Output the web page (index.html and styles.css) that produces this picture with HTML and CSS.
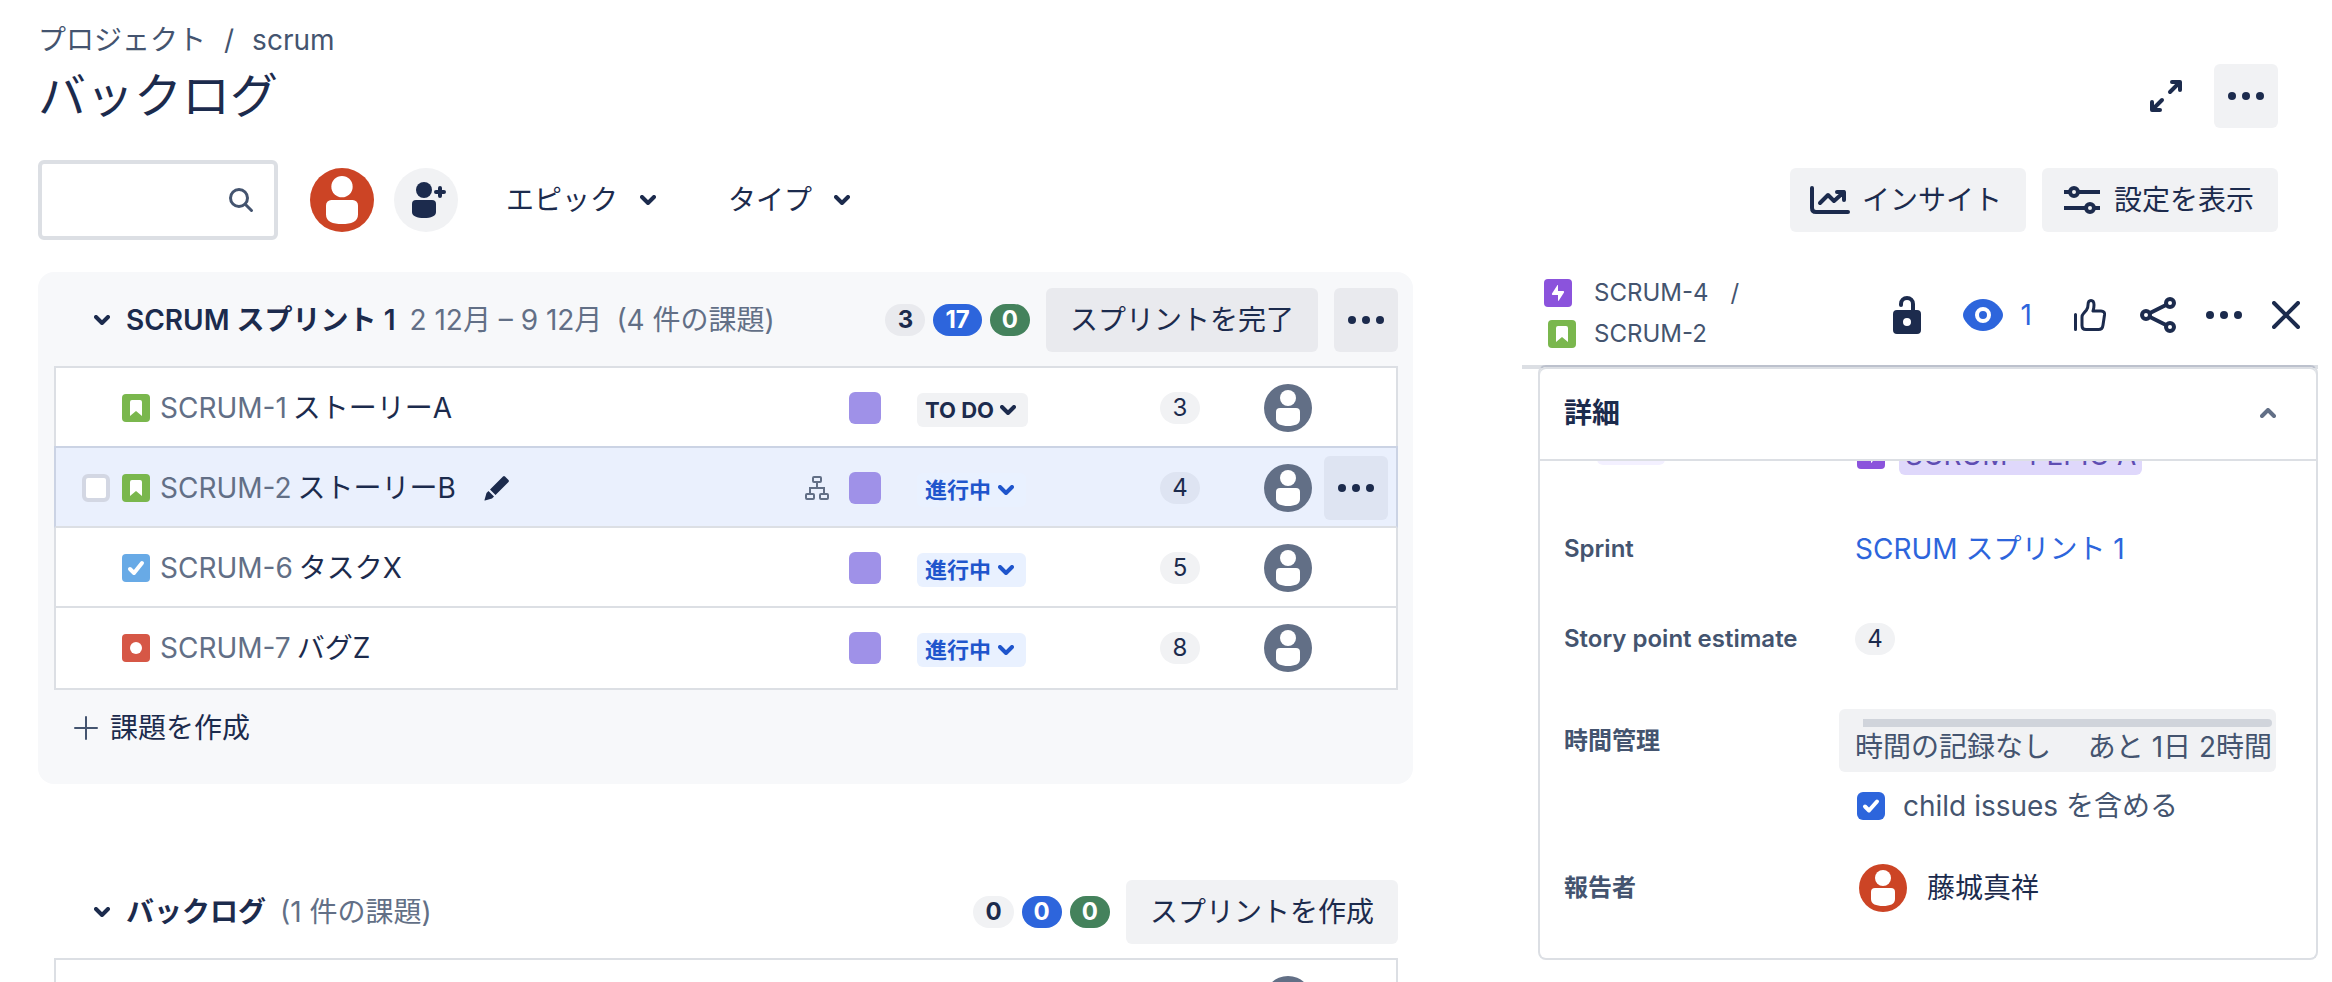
FILE: index.html
```html
<!DOCTYPE html>
<html lang="ja">
<head>
<meta charset="utf-8">
<title>バックログ - scrum</title>
<link rel="stylesheet" href="styles.css">
</head>
<body>
<svg class="sprite" aria-hidden="true">
  <symbol id="avatar" viewBox="0 0 48 48">
    <circle cx="24" cy="24" r="24" fill="currentColor"/>
    <circle cx="24" cy="14" r="8" fill="#fff"/>
    <path d="M16 24h16a4 4 0 0 1 4 4v7c0 5-5 7-12 7s-12-2-12-7v-7a4 4 0 0 1 4-4z" fill="#fff"/>
  </symbol>
  <symbol id="chevron" viewBox="0 0 16 10">
    <path d="M2 2l6 6 6-6" fill="none" stroke="currentColor" stroke-width="4" stroke-linecap="round" stroke-linejoin="round"/>
  </symbol>
  <symbol id="dots" viewBox="0 0 36 8">
    <circle cx="4" cy="4" r="4" fill="currentColor"/><circle cx="18" cy="4" r="4" fill="currentColor"/><circle cx="32" cy="4" r="4" fill="currentColor"/>
  </symbol>
  <symbol id="story" viewBox="0 0 28 28">
    <rect width="28" height="28" rx="4" fill="#7ab74d"/>
    <path d="M10 6h8a2 2 0 0 1 2 2v14l-6-5-6 5V8a2 2 0 0 1 2-2z" fill="#fff"/>
  </symbol>
  <symbol id="task" viewBox="0 0 28 28">
    <rect width="28" height="28" rx="4" fill="#68aae6"/>
    <path d="M8 15l4 4 8-10" fill="none" stroke="#fff" stroke-width="4" stroke-linecap="round" stroke-linejoin="round"/>
  </symbol>
  <symbol id="bug" viewBox="0 0 28 28">
    <rect width="28" height="28" rx="4" fill="#d65746"/>
    <circle cx="14" cy="14" r="6" fill="#fff"/>
  </symbol>
  <symbol id="epic" viewBox="0 0 28 28">
    <rect width="28" height="28" rx="4" fill="#8b53dc"/>
    <path d="M14 6v6h5.500q1 .5.500 1.500L14.500 22 14 21.500V16H8.500q-1-.5-.5-1.500L13.500 6z" fill="#fff"/>
  </symbol>
</svg>

<div class="page">
  <header class="page-head">
    <nav class="crumbs" aria-label="パンくず">
      <a href="#">プロジェクト</a><span>/</span><a href="#">scrum</a>
    </nav>
    <div class="title-row">
      <h1>バックログ</h1>
      <div class="title-actions">
        <button class="icon-button" aria-label="全画面">
          <svg width="32" height="32" viewBox="0 0 32 32" fill="none" stroke="currentColor" stroke-width="4" stroke-linecap="round" stroke-linejoin="round"><path d="M20 12L29 3M22 2h8v8M12 20l-9 9M2 22v8h8"/></svg>
        </button>
        <button class="icon-button filled" aria-label="その他"><svg width="36" height="8"><use href="#dots"/></svg></button>
      </div>
    </div>
    <div class="toolbar">
      <label class="search">
        <input type="search" aria-label="バックログを検索">
        <svg width="26" height="26" viewBox="0 0 26 26" fill="none" stroke="currentColor" stroke-width="3" stroke-linecap="round"><circle cx="11" cy="11" r="8.500"/><path d="M17.500 17.500l6 6"/></svg>
      </label>
      <div class="people">
        <button class="person red" aria-label="藤城真祥"><svg width="64" height="64"><use href="#avatar"/></svg></button>
        <button class="person" aria-label="メンバーを追加">
          <svg width="64" height="64" viewBox="0 0 64 64"><circle cx="32" cy="32" r="32" fill="#f1f2f4"/><g fill="currentColor"><circle cx="30" cy="22" r="8"/><path d="M22 32h16a4 4 0 0 1 4 4v8c0 4-5 6-12 6s-12-2-12-6v-8a4 4 0 0 1 4-4z"/></g><path d="M46 20v8M42 24h8" stroke="currentColor" stroke-width="4" stroke-linecap="round"/></svg>
        </button>
      </div>
      <div class="filters">
        <button class="filter" aria-haspopup="true">エピック<svg width="16" height="10"><use href="#chevron"/></svg></button>
        <button class="filter" aria-haspopup="true">タイプ<svg width="16" height="10"><use href="#chevron"/></svg></button>
      </div>
      <div class="view-actions">
        <button class="button">
          <svg width="40" height="28" viewBox="0 0 40 28" fill="none" stroke="currentColor" stroke-width="4" stroke-linecap="round" stroke-linejoin="round"><path d="M2 2v20q0 4 4 4h32M10 17l8-8 6 6 10-9M27 6h7v8"/></svg>インサイト</button>
        <button class="button">
          <svg width="40" height="28" viewBox="-2 0 40 28" fill="none" stroke="currentColor" stroke-width="4"><path d="M0 6h5M15 6h21M0 22h21M31 22h5"/><circle cx="10" cy="6" r="4"/><circle cx="26" cy="22" r="4"/></svg>設定を表示</button>
      </div>
    </div>
  </header>

  <div class="columns">
    <main class="boards">
      <section class="board tinted">
        <div class="board-head">
          <button class="toggle" aria-label="折りたたむ"><svg width="16" height="10"><use href="#chevron"/></svg></button>
          <h2>SCRUM スプリント 1</h2>
          <span class="muted dates">2 12月 – 9 12月</span>
          <span class="muted count">(4 件の課題)</span>
          <div class="totals"><span class="pill">3</span><span class="pill blue">17</span><span class="pill green">0</span></div>
          <button class="button wide">スプリントを完了</button>
          <button class="icon-button filled" aria-label="スプリントの操作"><svg width="36" height="8"><use href="#dots"/></svg></button>
        </div>
        <ul class="issues">
          <li class="issue">
            <span class="tick"></span>
            <svg class="type" width="28" height="28"><use href="#story"/></svg>
            <a class="key" href="#">SCRUM-1</a><span class="name">ストーリーA</span>
            <span class="swatch"></span>
            <div class="status-cell"><label class="status"><select aria-label="ステータス"><option>TO DO</option></select><svg width="16" height="10"><use href="#chevron"/></svg></label></div>
            <span class="pill light">3</span>
            <svg class="assignee" width="48" height="48"><use href="#avatar"/></svg>
            <span class="row-menu"></span>
          </li>
          <li class="issue selected">
            <input class="tick" type="checkbox" aria-label="SCRUM-2 を選択">
            <svg class="type" width="28" height="28"><use href="#story"/></svg>
            <a class="key" href="#">SCRUM-2</a><span class="name">ストーリーB</span>
            <button class="plain edit" aria-label="編集"><svg width="26" height="26" viewBox="0 0 26 26" fill="currentColor"><path d="M19 1.500q1-1 2 0L24.500 5q1 1 0 2L11.500 20 6 14.500zM4.500 16L10 21.500 8 23.500 1 25.500Q.3 25.700.5 25L2.500 18z"/></svg></button>
            <svg class="children" width="24" height="24" viewBox="0 0 24 24" fill="none" stroke="currentColor" stroke-width="2"><rect x="8" y="1" width="8" height="5" rx="1"/><rect x="1" y="18" width="8" height="5" rx="1"/><rect x="15" y="18" width="8" height="5" rx="1"/><path d="M12 6v6M5 18v-6h14v6"/></svg>
            <span class="swatch"></span>
            <div class="status-cell"><label class="status doing"><select aria-label="ステータス"><option>進行中</option></select><svg width="16" height="10"><use href="#chevron"/></svg></label></div>
            <span class="pill light">4</span>
            <svg class="assignee" width="48" height="48"><use href="#avatar"/></svg>
            <button class="icon-button filled row-menu" aria-label="課題の操作"><svg width="36" height="8"><use href="#dots"/></svg></button>
          </li>
          <li class="issue">
            <span class="tick"></span>
            <svg class="type" width="28" height="28"><use href="#task"/></svg>
            <a class="key" href="#">SCRUM-6</a><span class="name">タスクX</span>
            <span class="swatch"></span>
            <div class="status-cell"><label class="status doing"><select aria-label="ステータス"><option>進行中</option></select><svg width="16" height="10"><use href="#chevron"/></svg></label></div>
            <span class="pill light">5</span>
            <svg class="assignee" width="48" height="48"><use href="#avatar"/></svg>
            <span class="row-menu"></span>
          </li>
          <li class="issue">
            <span class="tick"></span>
            <svg class="type" width="28" height="28"><use href="#bug"/></svg>
            <a class="key" href="#">SCRUM-7</a><span class="name">バグZ</span>
            <span class="swatch"></span>
            <div class="status-cell"><label class="status doing"><select aria-label="ステータス"><option>進行中</option></select><svg width="16" height="10"><use href="#chevron"/></svg></label></div>
            <span class="pill light">8</span>
            <svg class="assignee" width="48" height="48"><use href="#avatar"/></svg>
            <span class="row-menu"></span>
          </li>
        </ul>
        <button class="plain create"><svg width="24" height="24" viewBox="0 0 24 24" stroke="#44546f" stroke-width="2" stroke-linecap="round"><path d="M12 1v22M1 12h22"/></svg>課題を作成</button>
      </section>

      <section class="board">
        <div class="board-head">
          <button class="toggle" aria-label="折りたたむ"><svg width="16" height="10"><use href="#chevron"/></svg></button>
          <h2>バックログ</h2>
          <span class="muted count">(1 件の課題)</span>
          <div class="totals"><span class="pill">0</span><span class="pill blue">0</span><span class="pill green">0</span></div>
          <button class="button wide">スプリントを作成</button>
        </div>
        <ul class="issues">
          <li class="issue">
            <svg class="assignee last" width="48" height="48"><use href="#avatar"/></svg>
            <span class="row-menu"></span>
          </li>
        </ul>
      </section>
    </main>

    <aside class="detail">
      <div class="detail-head">
        <div class="path">
          <div class="path-line"><svg width="28" height="28"><use href="#epic"/></svg><a href="#">SCRUM-4</a><span>/</span></div>
          <div class="path-line current"><svg width="28" height="28"><use href="#story"/></svg><a href="#">SCRUM-2</a></div>
        </div>
        <div class="detail-actions">
          <button class="plain" aria-label="制限">
            <svg width="28" height="38" viewBox="0 0 28 38"><path d="M8 9V8a6 6 0 0 1 12 0v8" fill="none" stroke="currentColor" stroke-width="4" stroke-linecap="round"/><path fill="currentColor" fill-rule="evenodd" d="M4 14h20a4 4 0 0 1 4 4v16a4 4 0 0 1-4 4H4a4 4 0 0 1-4-4V18a4 4 0 0 1 4-4zm10 8a4 4 0 1 0 0 8 4 4 0 0 0 0-8z"/></svg>
          </button>
          <button class="plain watch" aria-label="ウォッチ 1">
            <svg width="40" height="32" viewBox="0 0 40 32"><path fill="currentColor" d="M20 0c9 0 15 5 19 12q2 4 0 8c-4 7-10 12-19 12S5 27 1 20q-2-4 0-8C5 5 11 0 20 0z"/><circle cx="20" cy="16" r="6" fill="none" stroke="#fff" stroke-width="4"/></svg>1</button>
          <button class="plain vote" aria-label="投票">
            <svg width="32" height="32" viewBox="0 0 32 32" fill="none" stroke="currentColor" stroke-width="3" stroke-linecap="round" stroke-linejoin="round"><path d="M1.500 15.500v15M8 18q0-2 1.500-3.500l3-3.500q1.500-2 1.500-5 0-4.500 3-4.500t3 4.500q0 3-1 6h8q4 0 3.500 4l-1.500 10q-.5 4.500-4.500 4.500H12q-4 0-4-4z"/></svg>
          </button>
          <button class="plain" aria-label="共有">
            <svg width="36" height="36" viewBox="0 0 36 36" fill="none" stroke="currentColor" stroke-width="4"><circle cx="6" cy="18" r="4"/><circle cx="30" cy="6" r="4"/><circle cx="30" cy="30" r="4"/><path d="M10 16L26 8M10 20l16 8"/></svg>
          </button>
          <button class="plain" aria-label="その他の操作"><svg width="36" height="8"><use href="#dots"/></svg></button>
          <button class="plain" aria-label="閉じる">
            <svg width="28" height="28" viewBox="0 0 28 28" stroke="currentColor" stroke-width="4" stroke-linecap="round"><path d="M2 2l24 24M26 2L2 26"/></svg>
          </button>
        </div>
      </div>
      <section class="card">
        <div class="card-head">
          <h2>詳細</h2>
          <button class="plain collapse" aria-label="折りたたむ"><svg width="16" height="10" viewBox="0 0 16 10"><path d="M2 8l6-6 6 6" fill="none" stroke="currentColor" stroke-width="4" stroke-linecap="round" stroke-linejoin="round"/></svg></button>
        </div>
        <div class="fields">
          <div class="field clipped">
            <span class="tag-slot"><span class="tag"></span></span>
            <div class="value"><svg class="parent-icon" width="28" height="28"><use href="#epic"/></svg><a class="parent" href="#">SCRUM-4 EPIC A</a></div>
          </div>
          <div class="field sprint"><h3>Sprint</h3><div class="value"><a class="link" href="#">SCRUM スプリント 1</a></div></div>
          <div class="field points"><h3>Story point estimate</h3><div class="value"><span class="pill light">4</span></div></div>
          <div class="field">
            <h3>時間管理</h3>
            <button class="time">
              <span class="time-bar"></span>
              <span class="time-text"><span>時間の記録なし</span><span>あと 1日 2時間</span></span>
            </button>
            <label class="include"><span class="box"><input type="checkbox" checked><svg width="28" height="28" viewBox="0 0 28 28"><path d="M8 14.500l4 4 8-9" fill="none" stroke="#fff" stroke-width="4" stroke-linecap="round" stroke-linejoin="round"/></svg></span>child issues を含める</label>
          </div>
          <div class="field"><h3>報告者</h3><div class="value reporter"><svg class="red" width="48" height="48"><use href="#avatar"/></svg>藤城真祥</div></div>
        </div>
      </section>
    </aside>
  </div>
</div>
</body>
</html>
```

FILE: styles.css
```css
* {
  box-sizing: border-box;
}

body {
  margin: 0;
  background: #fff;
  color: #1c2b4d;
  font: 28px/40px Inter, "Noto Sans CJK JP", sans-serif;
}

h1, h2, h3, ul {
  margin: 0;
  padding: 0;
  font: inherit;
}

a {
  color: inherit;
  text-decoration: none;
}

button, input, select {
  margin: 0;
  border: 0;
  padding: 0;
  background: none;
  color: inherit;
  font: inherit;
}

svg {
  display: block;
  flex: none;
}

.sprite {
  position: absolute;
  width: 0;
  height: 0;
}

.page {
  height: 100vh;
  overflow: hidden;
  padding: 24px 14px 0 38px;
}

/* Page header */

.page-head {
  margin: 0 40px 32px 0;
}

.crumbs {
  display: flex;
  gap: 18px;
  height: 32px;
  align-items: center;
  color: #44546f;
}

.title-row {
  display: flex;
  align-items: center;
  justify-content: space-between;
  margin: 8px 0 32px;
}

h1 {
  font-size: 48px;
  line-height: 56px;
  font-weight: 400;
}

.title-actions {
  display: flex;
  gap: 16px;
}

.icon-button {
  display: flex;
  flex: none;
  align-items: center;
  justify-content: center;
  width: 64px;
  height: 64px;
  border-radius: 6px;
}

.filled, .button {
  background: #f1f2f4;
}

.button {
  display: flex;
  flex: none;
  align-items: center;
  gap: 12px;
  height: 64px;
  padding: 0 24px 0 20px;
  border-radius: 6px;
  white-space: nowrap;
}

.button.wide {
  padding: 0 24px;
}

.toolbar {
  display: flex;
  align-items: center;
  height: 80px;
}

.search {
  display: flex;
  align-items: center;
  width: 240px;
  height: 80px;
  padding: 0 20px;
  border: 4px solid #dcdfe4;
  border-radius: 6px;
  color: #44546f;
}

.search input {
  flex: 1;
  min-width: 0;
  outline: 0;
}

.people {
  display: flex;
  gap: 20px;
  margin: 0 48px 0 32px;
}

.red {
  color: #cc4425;
}

.filters {
  display: flex;
  gap: 72px;
}

.filter {
  display: flex;
  align-items: center;
  gap: 22px;
}

.view-actions {
  display: flex;
  gap: 16px;
  margin-left: auto;
}

/* Two columns: boards and issue detail */

.columns {
  display: grid;
  grid-template-columns: minmax(0, 1375fr) minmax(0, 796fr);
  column-gap: 109px;
  align-items: start;
}

.boards {
  display: grid;
  gap: 80px;
}

.board {
  padding: 16px 15px 18px 16px;
  border-radius: 16px;
}

.tinted {
  background: #f7f8fa;
}

.board-head {
  display: flex;
  align-items: center;
  margin-bottom: 14px;
  white-space: nowrap;
}

.tinted .board-head .filled,
.tinted .button,
.tinted .board-head .pill:first-child {
  background: #e9eaee;
}

.toggle {
  margin: 0 16px 0 40px;
}

h2 {
  font-weight: 600;
}

.muted {
  color: #626f86;
}

.dates,
.count {
  margin-left: 14px;
}

.totals {
  display: flex;
  gap: 8px;
  margin: 0 16px 0 auto;
}

.pill {
  flex: none;
  min-width: 40px;
  height: 32px;
  padding: 0 12px;
  border-radius: 16px;
  background: #f1f2f4;
  font-size: 24px;
  line-height: 32px;
  font-weight: 700;
  text-align: center;
}

.pill.light {
  font-weight: 400;
}

.pill.blue {
  background: #2d65dc;
  color: #fff;
}

.pill.green {
  background: #44825c;
  color: #fff;
}

.board-head .icon-button {
  margin-left: 16px;
}

.issues {
  border: 2px solid #dcdfe4;
  background: #fff;
  list-style: none;
}

.issue {
  display: flex;
  align-items: center;
  height: 80px;
  padding: 2px 8px 0 26px;
  border-bottom: 2px solid #dcdfe4;
  white-space: nowrap;
}

.issue:last-child {
  padding-top: 0;
  border-bottom: 0;
}

.issue.selected {
  margin: -2px -2px 0;
  height: 82px;
  border: 2px solid #cbd3e4;
  border-bottom-color: #dcdfe4;
  background: #eaf0fd;
}

.selected .pill, .selected .filled {
  background: #dee4f2;
}

.tick {
  flex: none;
  width: 28px;
  height: 28px;
  margin-right: 12px;
}

input.tick {
  appearance: none;
  border: 4px solid #d3d7e3;
  border-radius: 6px;
  background: #fff;
}

.key {
  margin: 0 6px 0 10px;
  color: #626f86;
}

.edit {
  margin-left: 28px;
}

.swatch {
  flex: none;
  width: 32px;
  height: 32px;
  margin: 0 36px 0 auto;
  border-radius: 6px;
  background: #9f91e8;
}

.children {
  margin: 0 20px 0 auto;
  color: #626f86;
}

.children + .swatch {
  margin-left: 0;
}

.status-cell {
  flex: none;
  width: 243px;
}

.status {
  display: inline-grid;
  align-items: center;
  vertical-align: middle;
  height: 34px;
  border-radius: 6px;
  background: #f1f2f4;
  font-size: 22px;
  line-height: 34px;
  font-weight: 700;
}

.status select, .status svg {
  grid-area: 1 / 1;
}

.status select {
  appearance: none;
  height: 34px;
  padding: 0 34px 0 8px;
}

.status svg {
  justify-self: end;
  margin-right: 12px;
  pointer-events: none;
}

.status.doing {
  background: #e9f1ff;
  color: #1f55cc;
}

.assignee {
  margin: 0 12px 0 64px;
  color: #626f86;
}

.assignee.last {
  margin-left: auto;
}

.row-menu {
  flex: none;
  width: 64px;
}

.plain {
  display: flex;
  flex: none;
  align-items: center;
}

.create {
  gap: 12px;
  height: 76px;
  margin-left: 20px;
}

/* Issue detail */

.detail-head {
  display: flex;
  align-items: center;
  justify-content: space-between;
  height: 97px;
  padding: 0 18px 7px 22px;
  border-bottom: 4px solid #dcdfe4;
}

.path {
  padding-bottom: 4px;
  color: #44546f;
  font-size: 24px;
  line-height: 41px;
}

.path-line {
  display: flex;
  align-items: center;
  gap: 22px;
}

.path-line.current {
  gap: 18px;
  padding-left: 4px;
}

.detail-actions {
  display: flex;
  align-items: center;
  gap: 30px;
}

.watch {
  gap: 18px;
  margin: 0 12px;
  color: #2d65dc;
}

.vote {
  margin-right: 4px;
}

.card {
  margin: -4px 0 0 16px;
  border: 2px solid #dcdfe4;
  border-top-color: #bcc1cd;
  border-radius: 8px;
  background: #fff;
}

.card-head {
  display: flex;
  align-items: center;
  justify-content: space-between;
  height: 94px;
  padding: 0 40px 0 24px;
  border-bottom: 2px solid #dcdfe4;
  border-radius: 6px 6px 0 0;
  box-shadow: inset 0 2px #dcdfe4;
}

.collapse {
  color: #626f86;
}

.fields {
  display: grid;
  gap: 44px;
  padding: 0 40px 46px 24px;
}

.field {
  display: grid;
  grid-template-columns: 275px minmax(0, 1fr);
  align-items: center;
}

h3 {
  color: #44546f;
  font-size: 24px;
  line-height: 32px;
  font-weight: 600;
}

.value {
  display: flex;
  align-items: center;
  padding-left: 16px;
  white-space: nowrap;
}

/* Parent row, scrolled partly under the card header */
.clipped {
  grid-template-rows: 14px;
  height: 14px;
  overflow: hidden;
  align-items: end;
}

.clipped .value {
  align-items: flex-end;
  gap: 14px;
  padding-left: 18px;
}

.parent-icon {
  margin-bottom: 6px;
}

.parent {
  padding: 0 6px;
  border-radius: 6px;
  background: #dfd8fb;
  color: #5e4db2;
}

.tag-slot {
  padding: 0 0 10px 33px;
}

.tag {
  display: block;
  width: 68px;
  height: 32px;
  border-radius: 6px;
  background: #f3f0ff;
}

.sprint {
  height: 60px;
}

.points {
  height: 42px;
  padding-bottom: 10px;
}

.link {
  color: #2d65dc;
}

.time {
  display: grid;
  height: 63px;
  padding: 10px 4px 5px 16px;
  border-radius: 6px;
  background: #f1f2f4;
  color: #44546f;
  white-space: nowrap;
  overflow: hidden;
}

.time-bar {
  height: 8px;
  margin-left: 8px;
  border-radius: 0 4px 4px 0;
  background: #d0d4db;
}

.time-text {
  display: flex;
  justify-content: space-between;
}

.include {
  display: flex;
  grid-column: 2;
  align-items: center;
  gap: 18px;
  height: 28px;
  margin-top: 20px;
  padding-left: 18px;
  color: #44546f;
}

.box {
  display: grid;
}

.box input, .box svg {
  grid-area: 1 / 1;
  width: 28px;
  height: 28px;
}

.box input {
  appearance: none;
  border-radius: 6px;
  background: #2d65dc;
}

.box svg {
  pointer-events: none;
}

.reporter {
  gap: 20px;
  padding-left: 20px;
}
```
